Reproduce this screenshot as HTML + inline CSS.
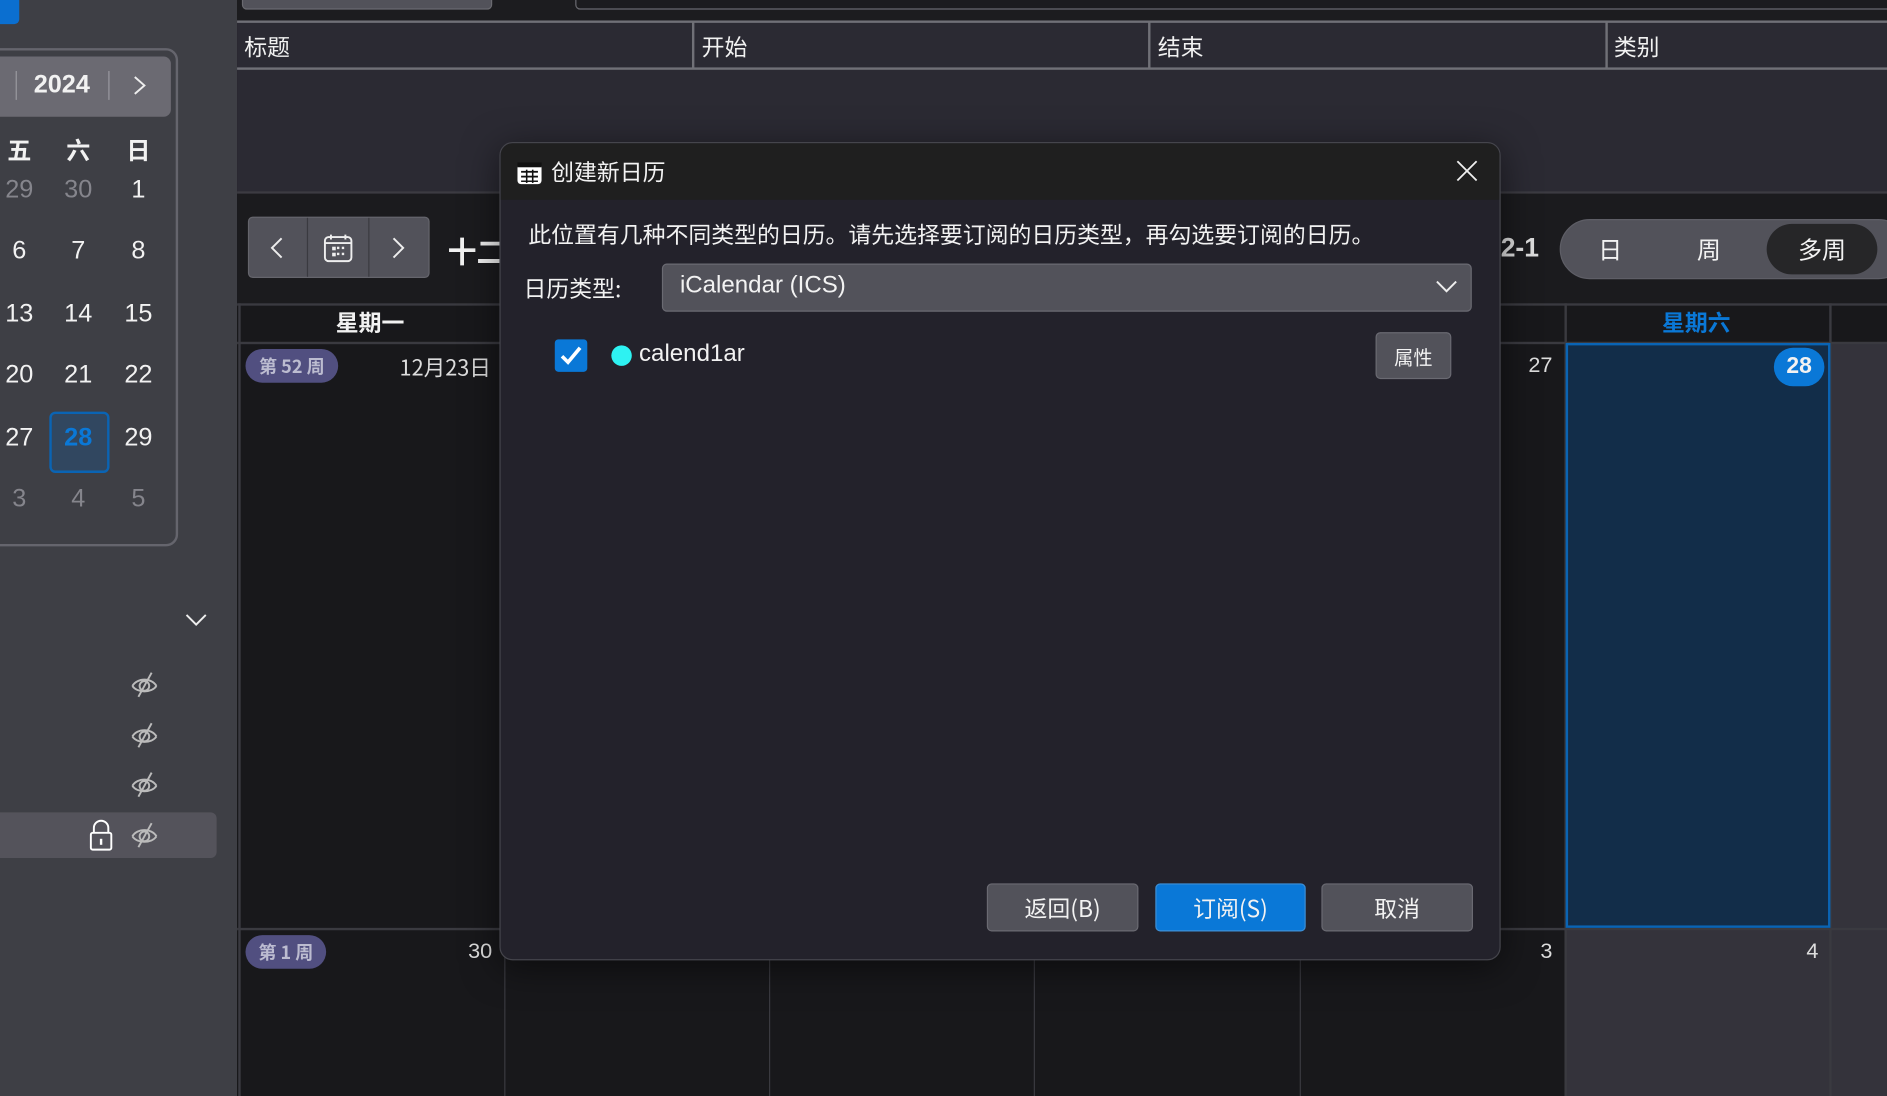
<!DOCTYPE html>
<html><head><meta charset="utf-8"><style>
*{margin:0;padding:0;box-sizing:border-box}
html,body{width:1887px;height:1096px;overflow:hidden;background:#1a1a1d}
#w{position:absolute;left:0;top:0;width:1568px;height:911px;transform:scale(1.20344);transform-origin:0 0;font-family:"Liberation Sans","Noto Sans CJK SC",sans-serif;color:#f2f2f2}
.a{position:absolute}
.c{display:flex;align-items:center;justify-content:center}
.cj{font-family:"Noto Sans CJK SC","Liberation Sans",sans-serif}
</style></head><body><div id="w">
<!-- sidebar -->
<div class="a" style="left:0;top:0;width:197px;height:911px;background:#3e3f45"></div>
<div class="a" style="left:0;top:0;width:16px;height:20px;background:#0b6fd0;border-radius:0 0 4px 0"></div>
<div class="a" style="left:-10px;top:40px;width:158px;height:414px;border:2px solid #65656d;border-radius:10px"></div>
<div class="a" style="left:0;top:47px;width:142px;height:50px;background:#6b6a72;border-radius:0 6px 6px 0"></div>
<div class="a" style="left:13px;top:59px;width:1px;height:24px;background:#9a9aa0"></div>
<div class="a" style="left:90px;top:59px;width:1px;height:24px;background:#9a9aa0"></div>
<div class="a" style="left:28px;top:59px;font-size:21px;font-weight:bold">2024</div>
<svg class="a" style="left:108px;top:62px" width="16" height="18"><path d="M4 2l8 7-8 7" stroke="#eee" stroke-width="1.6" fill="none"/></svg>
<div class="a cj" style="left:0;top:109px;width:140px;font-size:20px;font-weight:bold">
<span class="a" style="left:6px">五</span><span class="a" style="left:55px">六</span><span class="a" style="left:105px">日</span></div>
<div class="a" style="left:41px;top:342px;width:50px;height:51px;background:#314760;border:2px solid #0a64b4;border-radius:5px"></div>
<div id="mc"></div>
<svg class="a" style="left:153px;top:508px" width="20" height="14"><path d="M2 3l8 8 8-8" stroke="#eee" stroke-width="1.6" fill="none"/></svg>
<div class="a" style="left:0;top:675px;width:180px;height:38px;background:#54535b;border-radius:0 5px 5px 0"></div>
<svg class="a" style="left:73px;top:680px" width="22" height="28"><path d="M5 12V8a6 6 0 0 1 12 0v4" stroke="#fff" stroke-width="1.6" fill="none"/><rect x="2.5" y="12" width="17" height="14" rx="1.5" stroke="#fff" stroke-width="1.6" fill="none"/><rect x="10" y="17" width="2" height="5" fill="#fff"/></svg>
<!-- top -->
<div class="a" style="left:197px;top:0;width:1371px;height:17px;background:#1c1c1f"></div>
<div class="a" style="left:201px;top:-10px;width:208px;height:18px;background:#52525a;border:1px solid #6a6a70;border-radius:4px"></div>
<div class="a" style="left:478px;top:-10px;width:1100px;height:18px;border:1px solid #6a6a70;border-radius:4px"></div>
<div class="a" style="left:197px;top:17px;width:1371px;height:143px;background:#2b2a33"></div>
<div class="a" style="left:197px;top:17px;width:1371px;height:41px;border-top:2px solid #707077;border-bottom:2px solid #707077"></div>
<div class="a" style="left:575px;top:18px;width:2px;height:39px;background:#707077"></div>
<div class="a" style="left:954px;top:18px;width:2px;height:39px;background:#707077"></div>
<div class="a" style="left:1334px;top:18px;width:2px;height:39px;background:#707077"></div>
<div class="a cj" style="left:203px;top:25px;font-size:19px">标题</div>
<div class="a cj" style="left:583px;top:25px;font-size:19px">开始</div>
<div class="a cj" style="left:962px;top:25px;font-size:19px">结束</div>
<div class="a cj" style="left:1341px;top:25px;font-size:19px">类别</div>
<div class="a" style="left:197px;top:159px;width:1371px;height:2px;background:#3c3b42"></div>
<!-- toolbar -->
<div class="a" style="left:197px;top:161px;width:1371px;height:91px;background:#1b1b1e"></div>
<div class="a" style="left:206px;top:180px;width:151px;height:51px;background:#52525a;border:1px solid #65656c;border-radius:4px"></div>
<div class="a" style="left:255px;top:181px;width:1px;height:49px;background:#3a3a40"></div>
<div class="a" style="left:306px;top:181px;width:1px;height:49px;background:#3a3a40"></div>
<svg class="a" style="left:222px;top:196px" width="18" height="20"><path d="M12 2l-8 8 8 8" stroke="#eee" stroke-width="1.6" fill="none"/></svg>
<svg class="a" style="left:322px;top:196px" width="18" height="20"><path d="M5 2l8 8-8 8" stroke="#eee" stroke-width="1.6" fill="none"/></svg>
<svg class="a" style="left:268px;top:193px" width="26" height="26"><rect x="2" y="4" width="22" height="20" rx="3" stroke="#eee" stroke-width="1.6" fill="none"/><path d="M2 9h22M7 2v4M19 2v4" stroke="#eee" stroke-width="1.6"/><g fill="#eee"><rect x="8" y="12" width="3" height="3"/><rect x="12" y="12" width="2" height="2"/><rect x="16" y="12" width="2" height="2"/><rect x="8" y="17" width="3" height="3"/><rect x="12" y="17" width="2" height="2"/><rect x="16" y="17" width="2" height="2"/></g></svg>
<div class="a cj" style="left:372px;top:190px;font-size:24px;font-weight:bold">十二月</div>
<div class="a" style="left:1247px;top:193px;font-size:22px;font-weight:bold;color:#ddd">2-1</div>
<div class="a" style="left:1296px;top:182px;width:290px;height:50px;background:#52525a;border-radius:25px;border:1px solid #5e5e66"></div>
<div class="a" style="left:1468px;top:186px;width:92px;height:42px;background:#262628;border-radius:21px"></div>
<div class="a cj" style="left:1328px;top:192px;font-size:20px">日</div>
<div class="a cj" style="left:1410px;top:192px;font-size:20px">周</div>
<div class="a cj" style="left:1494px;top:192px;font-size:20px">多周</div>
<!-- grid -->
<div class="a" style="left:197px;top:252px;width:1371px;height:659px;background:#18181b"></div>
<div class="a" style="left:1521px;top:285px;width:47px;height:626px;background:#34333b"></div>
<div class="a" style="left:1300px;top:771px;width:221px;height:140px;background:#34333b"></div>
<div class="a" style="left:197px;top:252px;width:1371px;height:2px;background:#3a3a40"></div>
<div class="a" style="left:197px;top:284px;width:1371px;height:2px;background:#3a3a40"></div>
<div class="a" style="left:197px;top:771px;width:1371px;height:2px;background:#3a3a40"></div>
<div class="a" style="left:198px;top:252px;width:2px;height:659px;background:#3a3a40"></div>
<div class="a" style="left:419px;top:771px;width:1px;height:140px;background:#3a3a40"></div>
<div class="a" style="left:639px;top:771px;width:1px;height:140px;background:#3a3a40"></div>
<div class="a" style="left:859px;top:771px;width:1px;height:140px;background:#3a3a40"></div>
<div class="a" style="left:1080px;top:771px;width:1px;height:140px;background:#3a3a40"></div>
<div class="a" style="left:1300px;top:252px;width:2px;height:659px;background:#3a3a40"></div>
<div class="a" style="left:1520px;top:252px;width:2px;height:659px;background:#3a3a40"></div>
<div class="a" style="left:1301px;top:285px;width:220px;height:486px;background:#122d49;border:2px solid #0a64b4"></div>
<div class="a cj" style="left:279px;top:254px;font-size:19px;font-weight:bold">星期一</div>
<div class="a cj" style="left:1381px;top:254px;font-size:19px;font-weight:bold;color:#0a78d7">星期六</div>
<div class="a c cj" style="left:204px;top:290px;width:77px;height:28px;border-radius:14px;background:#514f80;color:#bcbcd0;font-size:15px;font-weight:bold">第 52 周</div>
<div class="a c cj" style="left:204px;top:777px;width:67px;height:28px;border-radius:14px;background:#514f80;color:#bcbcd0;font-size:15px;font-weight:bold">第 1 周</div>
<div class="a cj" style="left:332px;top:292px;font-size:18px;color:#ddd">12月23日</div>
<div class="a" style="left:389px;top:780px;font-size:18px;color:#ddd">30</div>
<div class="a" style="left:1270px;top:293px;font-size:18px;color:#ddd">27</div>
<div class="a" style="left:1280px;top:780px;font-size:18px;color:#ddd">3</div>
<div class="a" style="left:1501px;top:780px;font-size:18px;color:#ddd">4</div>
<div class="a c" style="left:1474px;top:289px;width:42px;height:32px;border-radius:16px;background:#0a78d7;font-size:19px;font-weight:bold">28</div>
<!-- dialog -->
<div class="a" style="left:415px;top:118px;width:832px;height:680px;background:#23222b;border:1px solid #45454c;border-radius:11px;overflow:hidden;box-shadow:0 6px 30px rgba(0,0,0,.5)">
<div class="a" style="left:0;top:0;width:832px;height:47px;background:#1f1f1f"></div>
<svg class="a" style="left:13px;top:15px" width="22" height="20"><rect x="1" y="1" width="20" height="18" rx="3" fill="#fff"/><rect x="1" y="1" width="20" height="4" fill="#111"/><g fill="#111"><rect x="4" y="8" width="14" height="1.5"/><rect x="4" y="12" width="14" height="1.5"/><rect x="4" y="16" width="14" height="1.2"/><rect x="8" y="7" width="1.3" height="11"/><rect x="13" y="7" width="1.3" height="11"/></g></svg>
<div class="a cj" style="left:42px;top:10px;font-size:19px">创建新日历</div>
<svg class="a" style="left:793px;top:13px" width="20" height="20"><path d="M2 2l16 16M18 2L2 18" stroke="#eee" stroke-width="1.5"/></svg>
<div class="a cj" style="left:23px;top:62px;font-size:19px">此位置有几种不同类型的日历。请先选择要订阅的日历类型，再勾选要订阅的日历。</div>
<div class="a cj" style="left:19px;top:107px;font-size:19px">日历类型:</div>
<div class="a" style="left:134px;top:100px;width:673px;height:40px;background:#52525a;border:1px solid #6a6a72;border-radius:4px"></div>
<div class="a" style="left:149px;top:107px;font-size:20px">iCalendar (ICS)</div>
<svg class="a" style="left:776px;top:112px" width="20" height="14"><path d="M2 3l8 8 8-8" stroke="#eee" stroke-width="1.6" fill="none"/></svg>
<div class="a" style="left:45px;top:163px;width:27px;height:27px;background:#0a78d7;border-radius:3px"></div>
<svg class="a" style="left:48px;top:167px" width="21" height="19"><path d="M3 10l5 5L18 3" stroke="#fff" stroke-width="3" fill="none"/></svg>
<div class="a" style="left:92px;top:168px;width:17px;height:17px;border-radius:50%;background:#2ef2f2"></div>
<div class="a" style="left:115px;top:164px;font-size:20px">calend1ar</div>
<div class="a c cj" style="left:727px;top:157px;width:63px;height:39px;background:#52525a;border:1px solid #6a6a72;border-radius:4px;font-size:16px">属性</div>
<div class="a c cj" style="left:404px;top:615px;width:126px;height:40px;background:#52525a;border:1px solid #6a6a72;border-radius:4px;font-size:19px">返回(B)</div>
<div class="a c cj" style="left:544px;top:615px;width:125px;height:40px;background:#0a78d7;border:1px solid #3d8fd6;border-radius:4px;font-size:19px">订阅(S)</div>
<div class="a c cj" style="left:682px;top:615px;width:126px;height:40px;background:#52525a;border:1px solid #6a6a72;border-radius:4px;font-size:19px">取消</div>
</div>
</div>
<script>
var rows=[["29","30","1"],["6","7","8"],["13","14","15"],["20","21","22"],["27","28","29"],["3","4","5"]];
var ys=[157,208,260,311,363,414],xs=[16,65,115],h="";
rows.forEach(function(r,i){r.forEach(function(t,j){var col=(i==0&&j<2)||i==5?"#85858c":(i==4&&j==1?"#0a78d7":"#f2f2f2");var fw=(i==4&&j==1)?"bold":"normal";
h+='<div class="a" style="left:'+(xs[j]-25)+'px;top:'+(ys[i]-11)+'px;width:50px;text-align:center;font-size:21px;color:'+col+';font-weight:'+fw+'">'+t+'</div>';});});
document.getElementById("mc").outerHTML=h;
var e="";[569,611,652,694].forEach(function(y){e+='<svg class="a" style="left:107px;top:'+(y-12)+'px" width="26" height="24"><path d="M3 13c4-7 16-7 20 0M3 13c4 6 16 6 20 0" stroke="#bbb" stroke-width="1.6" fill="none"/><circle cx="13" cy="13" r="4" stroke="#bbb" stroke-width="1.6" fill="none"/><path d="M19 2L8 22" stroke="#bbb" stroke-width="1.6"/></svg>';});
document.getElementById("w").insertAdjacentHTML("beforeend",e);
</script>
</body></html>
